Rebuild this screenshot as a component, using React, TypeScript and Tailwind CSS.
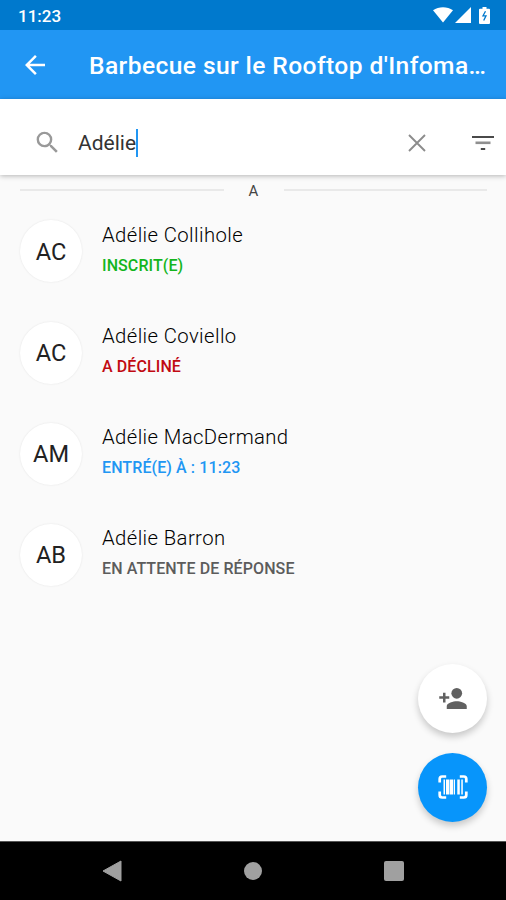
type Guest = {
	name: string
	initials: string
	status: string
	statusClass: string
}

const guests: Guest[] = [
	{
		name: "Adélie Collihole",
		initials: "AC",
		status: "INSCRIT(E)",
		statusClass: "text-[#13b51c]",
	},
	{
		name: "Adélie Coviello",
		initials: "AC",
		status: "A DÉCLINÉ",
		statusClass: "text-[#c10a12]",
	},
	{
		name: "Adélie MacDermand",
		initials: "AM",
		status: "ENTRÉ(E) À : 11:23",
		statusClass: "text-[#2196f3]",
	},
	{
		name: "Adélie Barron",
		initials: "AB",
		status: "EN ATTENTE DE RÉPONSE",
		statusClass: "text-[#5c5c5c]",
	},
]

function StatusBar() {
	return (
		<div className="flex h-[30px] shrink-0 items-center justify-between bg-[#0079cd] pl-[18px] pr-[16px] text-white">
			<span className="pt-[2px] text-[17px] leading-none font-medium">11:23</span>
			<div className="flex items-center">
				<svg width="20" height="16" viewBox="0 0 20 16" fill="currentColor">
					<path d="M0 3.2C5.8-.8 14.2-.8 20 3.2L10 15.5z" />
				</svg>
				<svg className="ml-[2px]" width="16" height="16" viewBox="0 0 16 16" fill="currentColor">
					<path d="M16 0v16H0z" />
				</svg>
				<svg className="ml-[8px]" width="11" height="17" viewBox="0 0 11 17">
					<path
						fill="currentColor"
						d="M3.5 0h4v1.7H10a1 1 0 0 1 1 1V16a1 1 0 0 1-1 1H1a1 1 0 0 1-1-1V2.7a1 1 0 0 1 1-1h2.5z"
					/>
					<path d="M6.5 4.2L4 8.8h3L4.700 13.500" fill="none" stroke="#0079cd" strokeWidth="1.3" />
				</svg>
			</div>
		</div>
	)
}

function AppBar() {
	return (
		<header className="flex h-[69px] shrink-0 items-center bg-[#2196f3] pl-[20px] text-white">
			<svg width="30" height="30" viewBox="0 0 24 24" fill="currentColor">
				<path d="M20 11H7.83l5.59-5.59L12 4l-8 8 8 8 1.41-1.41L7.83 13H20z" />
			</svg>
			<h1 className="ml-[39px] pt-[4px] text-[24.6px] leading-none font-medium tracking-[0.4px] whitespace-nowrap">
				Barbecue sur le Rooftop d'Infoma…
			</h1>
		</header>
	)
}

function SearchBar() {
	return (
		<div className="z-10 flex h-[76px] shrink-0 items-center bg-white pt-[12px] pr-[11px] pb-[1px] pl-[33px] shadow-[0_1px_5px_rgba(0,0,0,0.28)]">
			<svg className="text-[#999]" width="29" height="29" viewBox="0 0 24 24" fill="currentColor">
				<path d="M15.5 14h-.79l-.28-.27A6.471 6.471 0 0 0 16 9.5 6.5 6.5 0 1 0 9.5 16c1.61 0 3.09-.59 4.23-1.57l.27.28v.79l5 4.99L20.49 19zm-6 0C7.01 14 5 11.99 5 9.500S7.010 5 9.5 5 14 7.01 14 9.5 11.99 14 9.5 14z" />
			</svg>
			<div className="ml-[16px] flex items-center">
				<span className="pt-[2px] text-[21px] leading-none text-[#333]">Adélie</span>
				<span className="h-[28px] w-[2px] bg-[#2196f3]" />
			</div>
			<svg className="ml-auto text-[#8c8c8c]" width="18" height="18" viewBox="0 0 18 18" fill="none" stroke="currentColor" strokeWidth="1.9">
				<path d="M1 1l16 16M17 1L1 17" />
			</svg>
			<svg className="ml-[45px]" width="24" height="16" viewBox="0 0 24 16">
				<path fill="#4a4a4a" d="M1 1h22v2H1z" />
				<path fill="#8f8f8f" d="M4.500 6.500h15v2.600h-15z" />
				<path fill="#4a4a4a" d="M9.8 13h4.400v2H9.800z" />
			</svg>
		</div>
	)
}

function GuestRow({ guest }: { guest: Guest }) {
	return (
		<li className="flex h-[101.2px] items-start pl-[20px]">
			<div className="flex size-[62px] shrink-0 items-center justify-center rounded-full bg-white pt-[2px] text-[23.6px] leading-none text-[#222] shadow-[0_0_2px_rgba(0,0,0,0.1)]">
				{guest.initials}
			</div>
			<div className="ml-[20px] flex flex-col whitespace-nowrap">
				<span className="mt-[1.5px] text-[20.3px] leading-[26px] font-light tracking-[0.4px] text-black">
					{guest.name}
				</span>
				<span className={`mt-[8px] text-[16px] leading-[20px] font-medium tracking-[0.1px] ${guest.statusClass}`}>
					{guest.status}
				</span>
			</div>
		</li>
	)
}

function NavigationBar() {
	return (
		<nav className="flex h-[59px] shrink-0 items-center justify-between border-t border-[#555] bg-black pr-[102px] pl-[102px] text-[#a0a0a0]">
			<svg width="20" height="22" viewBox="0 0 20 22" fill="currentColor">
				<path d="M19 1v20L1 11z" stroke="currentColor" strokeLinejoin="round" />
			</svg>
			<span className="size-[18px] rounded-full bg-[#a0a0a0]" />
			<span className="size-[20px] rounded-[2px] bg-[#a0a0a0]" />
		</nav>
	)
}

export default function App() {
	return (
		<div className="relative flex h-[900px] w-[506px] flex-col overflow-hidden bg-[#fafafa] font-['Roboto',sans-serif]">
			<StatusBar />
			<AppBar />
			<SearchBar />

			<main className="flex-1">
				{/* Section divider */}
				<div className="flex h-[30px] items-center pr-[19px] pl-[20px]">
					<span className="h-[2px] flex-1 bg-[#e9e9e9]" />
					<span className="w-[60px] pt-[2px] text-center text-[15px] leading-none text-[#444]">A</span>
					<span className="h-[2px] flex-1 bg-[#e9e9e9]" />
				</div>
				<ul className="pt-[15.4px]">
					{guests.map(guest => (
						<GuestRow key={guest.name} guest={guest} />
					))}
				</ul>
			</main>

			{/* Floating actions */}
			<div className="absolute right-[19px] bottom-[78px] flex flex-col gap-[20px]">
				<button className="flex size-[69px] items-center justify-center rounded-full bg-white text-[#616161] shadow-[0_4px_7px_rgba(0,0,0,0.2)]">
					<svg width="30" height="30" viewBox="0 0 24 24" fill="currentColor">
						<circle cx="15" cy="7.400" r="4.300" />
						<path d="M6 9.700V7H4v2.700H1v2h3v3h2v-3h3v-2zM15 13.800c-2.670 0-8 1.300-8 4V20h16v-2.200c0-2.700-5.330-4-8-4z" />
					</svg>
				</button>
				<button className="flex size-[69px] items-center justify-center rounded-full bg-[#0795fb] text-white shadow-[0_4px_7px_rgba(0,0,0,0.2)]">
					<svg className="-mt-[2px]" width="30" height="24" viewBox="0 0 30 24">
						<path
							d="M1.700 7.500V4a2.500 2.500 0 0 1 2.500-2.500h4M21.800 1.500h4A2.500 2.500 0 0 1 28.300 4v3.500M28.300 16.500V20a2.500 2.500 0 0 1-2.500 2.500h-4M8.200 22.500h-4A2.500 2.500 0 0 1 1.700 20v-3.500"
							fill="none"
							stroke="currentColor"
							strokeWidth="2.700"
						/>
						<path fill="currentColor" d="M5.500 4.500h1.500v15H5.500zM8 4.500h3v15H8zM11.500 4.500h3.500v15h-3.500zM15.700 4.500h1.300v15h-1.300zM19.300 4.500h2.500v15h-2.500zM23.300 4.500h1.500v15h-1.500z" />
					</svg>
				</button>
			</div>

			<NavigationBar />
		</div>
	)
}
